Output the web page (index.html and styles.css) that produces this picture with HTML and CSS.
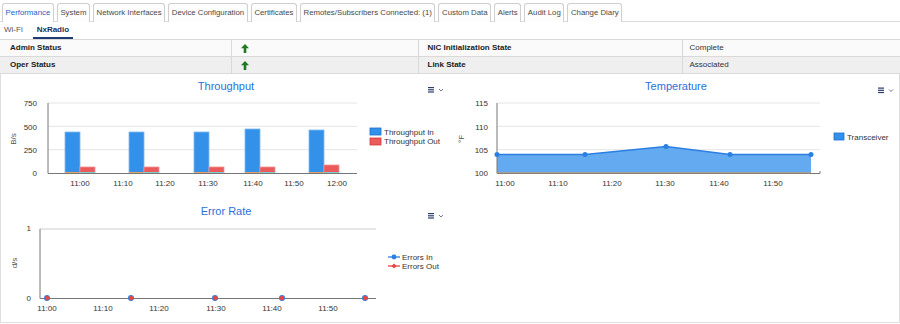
FILE: index.html
```html
<!DOCTYPE html>
<html>
<head>
<meta charset="utf-8">
<link rel="stylesheet" href="styles.css">
</head>
<body>
<nav class="tabs">
  <span class="tab active">Performance</span>
  <span class="tab">System</span>
  <span class="tab">Network Interfaces</span>
  <span class="tab">Device Configuration</span>
  <span class="tab">Certificates</span>
  <span class="tab">Remotes/Subscribers Connected: (1)</span>
  <span class="tab">Custom Data</span>
  <span class="tab">Alerts</span>
  <span class="tab">Audit Log</span>
  <span class="tab">Change Diary</span>
</nav>
<nav class="subtabs">
  <span class="subtab">Wi-Fi</span>
  <span class="subtab active">NxRadio</span>
</nav>
<table class="status">
  <colgroup><col class="c1"><col class="c2"><col class="c3"><col class="c4"></colgroup>
  <tr class="r1">
    <td class="label">Admin Status</td>
    <td><svg class="arrow" viewBox="0 0 8 9" width="8" height="9"><path d="M4 0 L8 4.2 L5.3 4.2 L5.3 9 L2.7 9 L2.7 4.2 L0 4.2 Z" fill="#1d7a1d"/></svg></td>
    <td class="label">NIC Initialization State</td>
    <td>Complete</td>
  </tr>
  <tr class="r2">
    <td class="label">Oper Status</td>
    <td><svg class="arrow" viewBox="0 0 8 9" width="8" height="9"><path d="M4 0 L8 4.2 L5.3 4.2 L5.3 9 L2.7 9 L2.7 4.2 L0 4.2 Z" fill="#1d7a1d"/></svg></td>
    <td class="label">Link State</td>
    <td>Associated</td>
  </tr>
</table>
<section class="charts">
  <div class="panel">
    <svg class="chart" width="449" height="122" viewBox="1 74 449 122">
      <text class="title" x="226" y="90">Throughput</text>
      <g class="menu">
        <rect x="428" y="87" width="6" height="1.2"/><rect x="428" y="89.2" width="6" height="1.2"/><rect x="428" y="91.4" width="6" height="1.2"/>
        <path d="M439 89 L441 91 L443 89" fill="none" stroke="#5b6c94" stroke-width="0.9"/>
      </g>
      <g class="grid">
        <line x1="48" y1="103" x2="357" y2="103"/><line x1="48" y1="126.3" x2="357" y2="126.3"/><line x1="48" y1="149.7" x2="357" y2="149.7"/>
      </g>
      <g class="ylab">
        <text x="37" y="106">750</text><text x="37" y="129.5">500</text><text x="37" y="153">250</text><text x="37" y="176">0</text>
      </g>
      <text class="atitle" transform="translate(16 139) rotate(-90)">B/s</text>
      <g class="bin">
        <rect x="65" y="132" width="15" height="41"/><rect x="129" y="132" width="15" height="41"/><rect x="194" y="132" width="15" height="41"/><rect x="245" y="129" width="15" height="44"/><rect x="309" y="130" width="15" height="43"/>
      </g>
      <g class="bout">
        <rect x="80" y="167" width="15" height="6"/><rect x="144" y="167" width="15" height="6"/><rect x="209" y="167" width="15" height="6"/><rect x="260" y="167" width="15" height="6"/><rect x="324" y="165" width="15" height="8"/>
      </g>
      <g class="zero-o">
        <line x1="65" y1="172.5" x2="80" y2="172.5"/><line x1="129" y1="172.5" x2="144" y2="172.5"/><line x1="194" y1="172.5" x2="209" y2="172.5"/><line x1="245" y1="172.5" x2="260" y2="172.5"/><line x1="309" y1="172.5" x2="324" y2="172.5"/>
      </g>
      <g class="zero-t">
        <line x1="80" y1="172.5" x2="95" y2="172.5"/><line x1="144" y1="172.5" x2="159" y2="172.5"/><line x1="209" y1="172.5" x2="224" y2="172.5"/><line x1="260" y1="172.5" x2="275" y2="172.5"/><line x1="324" y1="172.5" x2="339" y2="172.5"/>
      </g>
      <g class="axis">
        <line x1="48" y1="103" x2="48" y2="173.5"/><line x1="48" y1="173.5" x2="357" y2="173.5"/>
      </g>
      <g class="xlab">
        <text x="80" y="186">11:00</text><text x="123" y="186">11:10</text><text x="165" y="186">11:20</text><text x="208" y="186">11:30</text><text x="253" y="186">11:40</text><text x="294" y="186">11:50</text><text x="337" y="186">12:00</text>
      </g>
      <rect class="lg-blue" x="370" y="128" width="11" height="7"/>
      <text class="lg" x="384" y="134.5">Throughput In</text>
      <rect class="lg-red" x="370" y="138" width="11" height="7"/>
      <text class="lg" x="384" y="144">Throughput Out</text>
    </svg>
  </div>
  <div class="panel">
    <svg class="chart" width="449" height="122" viewBox="450 74 449 122">
      <text class="title" x="676" y="90">Temperature</text>
      <g class="menu">
        <rect x="878" y="87.5" width="6" height="1.2"/><rect x="878" y="89.7" width="6" height="1.2"/><rect x="878" y="91.9" width="6" height="1.2"/>
        <path d="M889 89.5 L891 91.5 L893 89.5" fill="none" stroke="#5b6c94" stroke-width="0.9"/>
      </g>
      <g class="grid">
        <line x1="497" y1="103" x2="820" y2="103"/><line x1="497" y1="126.3" x2="820" y2="126.3"/><line x1="497" y1="149.7" x2="820" y2="149.7"/>
      </g>
      <g class="ylab">
        <text x="488" y="106">115</text><text x="488" y="129.5">110</text><text x="488" y="153">105</text><text x="488" y="176">100</text>
      </g>
      <text class="atitle" transform="translate(464 139) rotate(-90)">°F</text>
      <polygon class="area" points="497,154.5 585,154.5 666,146.5 730,154.5 811,154.5 811,173 497,173"/>
      <polyline class="aline" points="497,154.5 585,154.5 666,146.5 730,154.5 811,154.5"/>
      <g class="axis">
        <line x1="497" y1="103" x2="497" y2="173.5"/><line x1="497" y1="173.5" x2="820" y2="173.5"/><line x1="820" y1="171" x2="820" y2="173.5"/>
      </g>
      <line class="tan" x1="497" y1="172.8" x2="811" y2="172.8"/>
      <g class="pts">
        <circle cx="497" cy="154.5" r="2.5"/><circle cx="585" cy="154.5" r="2.5"/><circle cx="666" cy="146.5" r="2.5"/><circle cx="730" cy="154.5" r="2.5"/><circle cx="811" cy="154.5" r="2.5"/>
      </g>
      <g class="xlab">
        <text x="505" y="186">11:00</text><text x="558" y="186">11:10</text><text x="612" y="186">11:20</text><text x="665" y="186">11:30</text><text x="719" y="186">11:40</text><text x="773" y="186">11:50</text>
      </g>
      <rect class="lg-blue" x="834" y="133" width="10" height="7"/>
      <text class="lg" x="847" y="140">Transceiver</text>
    </svg>
  </div>
  <div class="panel">
    <svg class="chart" width="449" height="126" viewBox="1 196 449 126">
      <text class="title" x="226" y="215">Error Rate</text>
      <g class="menu">
        <rect x="428" y="213" width="6" height="1.2"/><rect x="428" y="215.2" width="6" height="1.2"/><rect x="428" y="217.4" width="6" height="1.2"/>
        <path d="M439 215 L441 217 L443 215" fill="none" stroke="#5b6c94" stroke-width="0.9"/>
      </g>
      <line class="grid2" x1="40" y1="229" x2="376" y2="229"/>
      <g class="ylab">
        <text x="31" y="231">1</text><text x="31" y="301">0</text>
      </g>
      <text class="atitle" transform="translate(17 263) rotate(-90)">d/s</text>
      <g class="axis">
        <line x1="40" y1="229" x2="40" y2="298.5"/><line x1="40" y1="298.5" x2="376" y2="298.5"/>
      </g>
      <g class="epts">
        <circle cx="47" cy="298" r="3"/><circle cx="131" cy="298" r="3"/><circle cx="215" cy="298" r="3"/><circle cx="282" cy="298" r="3"/><circle cx="365" cy="298" r="3"/>
      </g>
      <g class="epts2">
        <circle cx="47" cy="298" r="2.2"/><circle cx="131" cy="298" r="2.2"/><circle cx="215" cy="298" r="2.2"/><circle cx="282" cy="298" r="2.2"/><circle cx="365" cy="298" r="2.2"/>
      </g>
      <g class="xlab">
        <text x="47" y="311">11:00</text><text x="103" y="311">11:10</text><text x="159" y="311">11:20</text><text x="216" y="311">11:30</text><text x="272" y="311">11:40</text><text x="328" y="311">11:50</text>
      </g>
      <line x1="388" y1="257" x2="400" y2="257" stroke="#2b7fe3" stroke-width="1.3"/>
      <circle cx="394" cy="257" r="2.4" fill="#2b7fe3"/>
      <text class="lg" x="402" y="260">Errors In</text>
      <line x1="388" y1="266" x2="400" y2="266" stroke="#e84545" stroke-width="1.3"/>
      <path d="M394 263.5 L396.5 266 L394 268.5 L391.5 266 Z" fill="#e84545"/>
      <text class="lg" x="402" y="269">Errors Out</text>
    </svg>
  </div>
  <div class="panel"></div>
</section>
</body>
</html>
```
FILE: styles.css
```css
html, body {
  margin: 0;
  padding: 0;
}
body {
  width: 900px;
  height: 324px;
  overflow: hidden;
  background: #fff;
  font-family: "Liberation Sans", Arial, sans-serif;
  font-size: 8px;
  color: #333;
}
.tabs {
  display: flex;
  gap: 3px;
  padding: 3px 0 0 2px;
  height: 18px;
  border-bottom: 1px solid #dcdcdc;
}
.tab {
  box-sizing: border-box;
  height: 19px;
  line-height: 17px;
  padding: 0 2.6px;
  border: 1px solid #cfcfcf;
  border-bottom: none;
  border-radius: 3px 3px 0 0;
  font-size: 7.8px;
  color: #4a4a4a;
  background: #fdfdfd;
  white-space: nowrap;
}
.tab.active {
  color: #1b5fc4;
  background: #fff;
  position: relative;
  z-index: 1;
}
.subtabs {
  display: flex;
  gap: 6px;
  height: 17px;
}
.subtab {
  padding: 0 4px;
  line-height: 15px;
  height: 15px;
  border-bottom: 2px solid transparent;
  color: #555;
}
.subtab.active {
  font-weight: bold;
  color: #1d2f5c;
  border-bottom-color: #1f3b73;
}
.status {
  width: 900px;
  border-collapse: collapse;
  table-layout: fixed;
}
.status col.c1 { width: 231px; }
.status col.c2 { width: 187px; }
.status col.c3 { width: 264px; }
.status col.c4 { width: 218px; }
.status td {
  height: 16px;
  padding: 0 8px 0 9px;
  border: 1px solid #d9d9d9;
  color: #333;
  line-height: 16px;
  white-space: nowrap;
}
.status td:first-child { border-left: none; padding-left: 10px; }
.status td:last-child { border-right: none; padding-left: 7px; }
.status .r1 td { background: #fafafa; }
.status .r2 td { background: #efefef; }
.status td.label {
  font-weight: bold;
  color: #222;
}
.arrow {
  display: block;
}
.charts {
  box-sizing: border-box;
  width: 900px;
  height: 249px;
  display: grid;
  grid-template-columns: 449px 449px;
  grid-template-rows: 122px 126px;
  border-left: 1px solid #dedede;
  border-right: 1px solid #dedede;
  border-bottom: 1px solid #dedede;
}
.panel {
  overflow: hidden;
}
.chart {
  display: block;
}
.chart text {
  font-family: "Liberation Sans", Arial, sans-serif;
  font-size: 8px;
  fill: #333;
}
.chart text.title {
  font-size: 11px;
  fill: #2a6fdb;
  text-anchor: middle;
}
.chart .ylab text { text-anchor: end; }
.chart .xlab text { text-anchor: middle; }
.chart text.atitle {
  fill: #555;
  text-anchor: middle;
}
.chart text.lg { fill: #333; }
.menu rect { fill: #2c3e6c; }
.grid line { stroke: #e4e4e4; stroke-width: 1; }
.grid2 { stroke: #e6e6e6; stroke-width: 2; }
.axis line { stroke: #777; stroke-width: 1; }
.bin rect { fill: #3391ea; stroke: #7fbaf3; stroke-width: 0.8; }
.bout rect { fill: #ec5b5b; stroke: #f39393; stroke-width: 0.8; }
.zero-o line { stroke: #e6a06a; stroke-width: 1; }
.zero-t line { stroke: #7fd0cc; stroke-width: 1; }
.lg-blue { fill: #3391ea; stroke: #1c6fd0; stroke-width: 0.8; }
.lg-red { fill: #ec5b5b; stroke: #d23a3a; stroke-width: 0.8; }
.area { fill: #64aaf0; }
.aline { fill: none; stroke: #2b7fe3; stroke-width: 1.5; }
.tan { stroke: #bf9a72; stroke-width: 1; }
.pts circle { fill: #2b7fe3; }
.epts circle { fill: #2b7fe3; }
.epts2 circle { fill: #e84545; }
```
